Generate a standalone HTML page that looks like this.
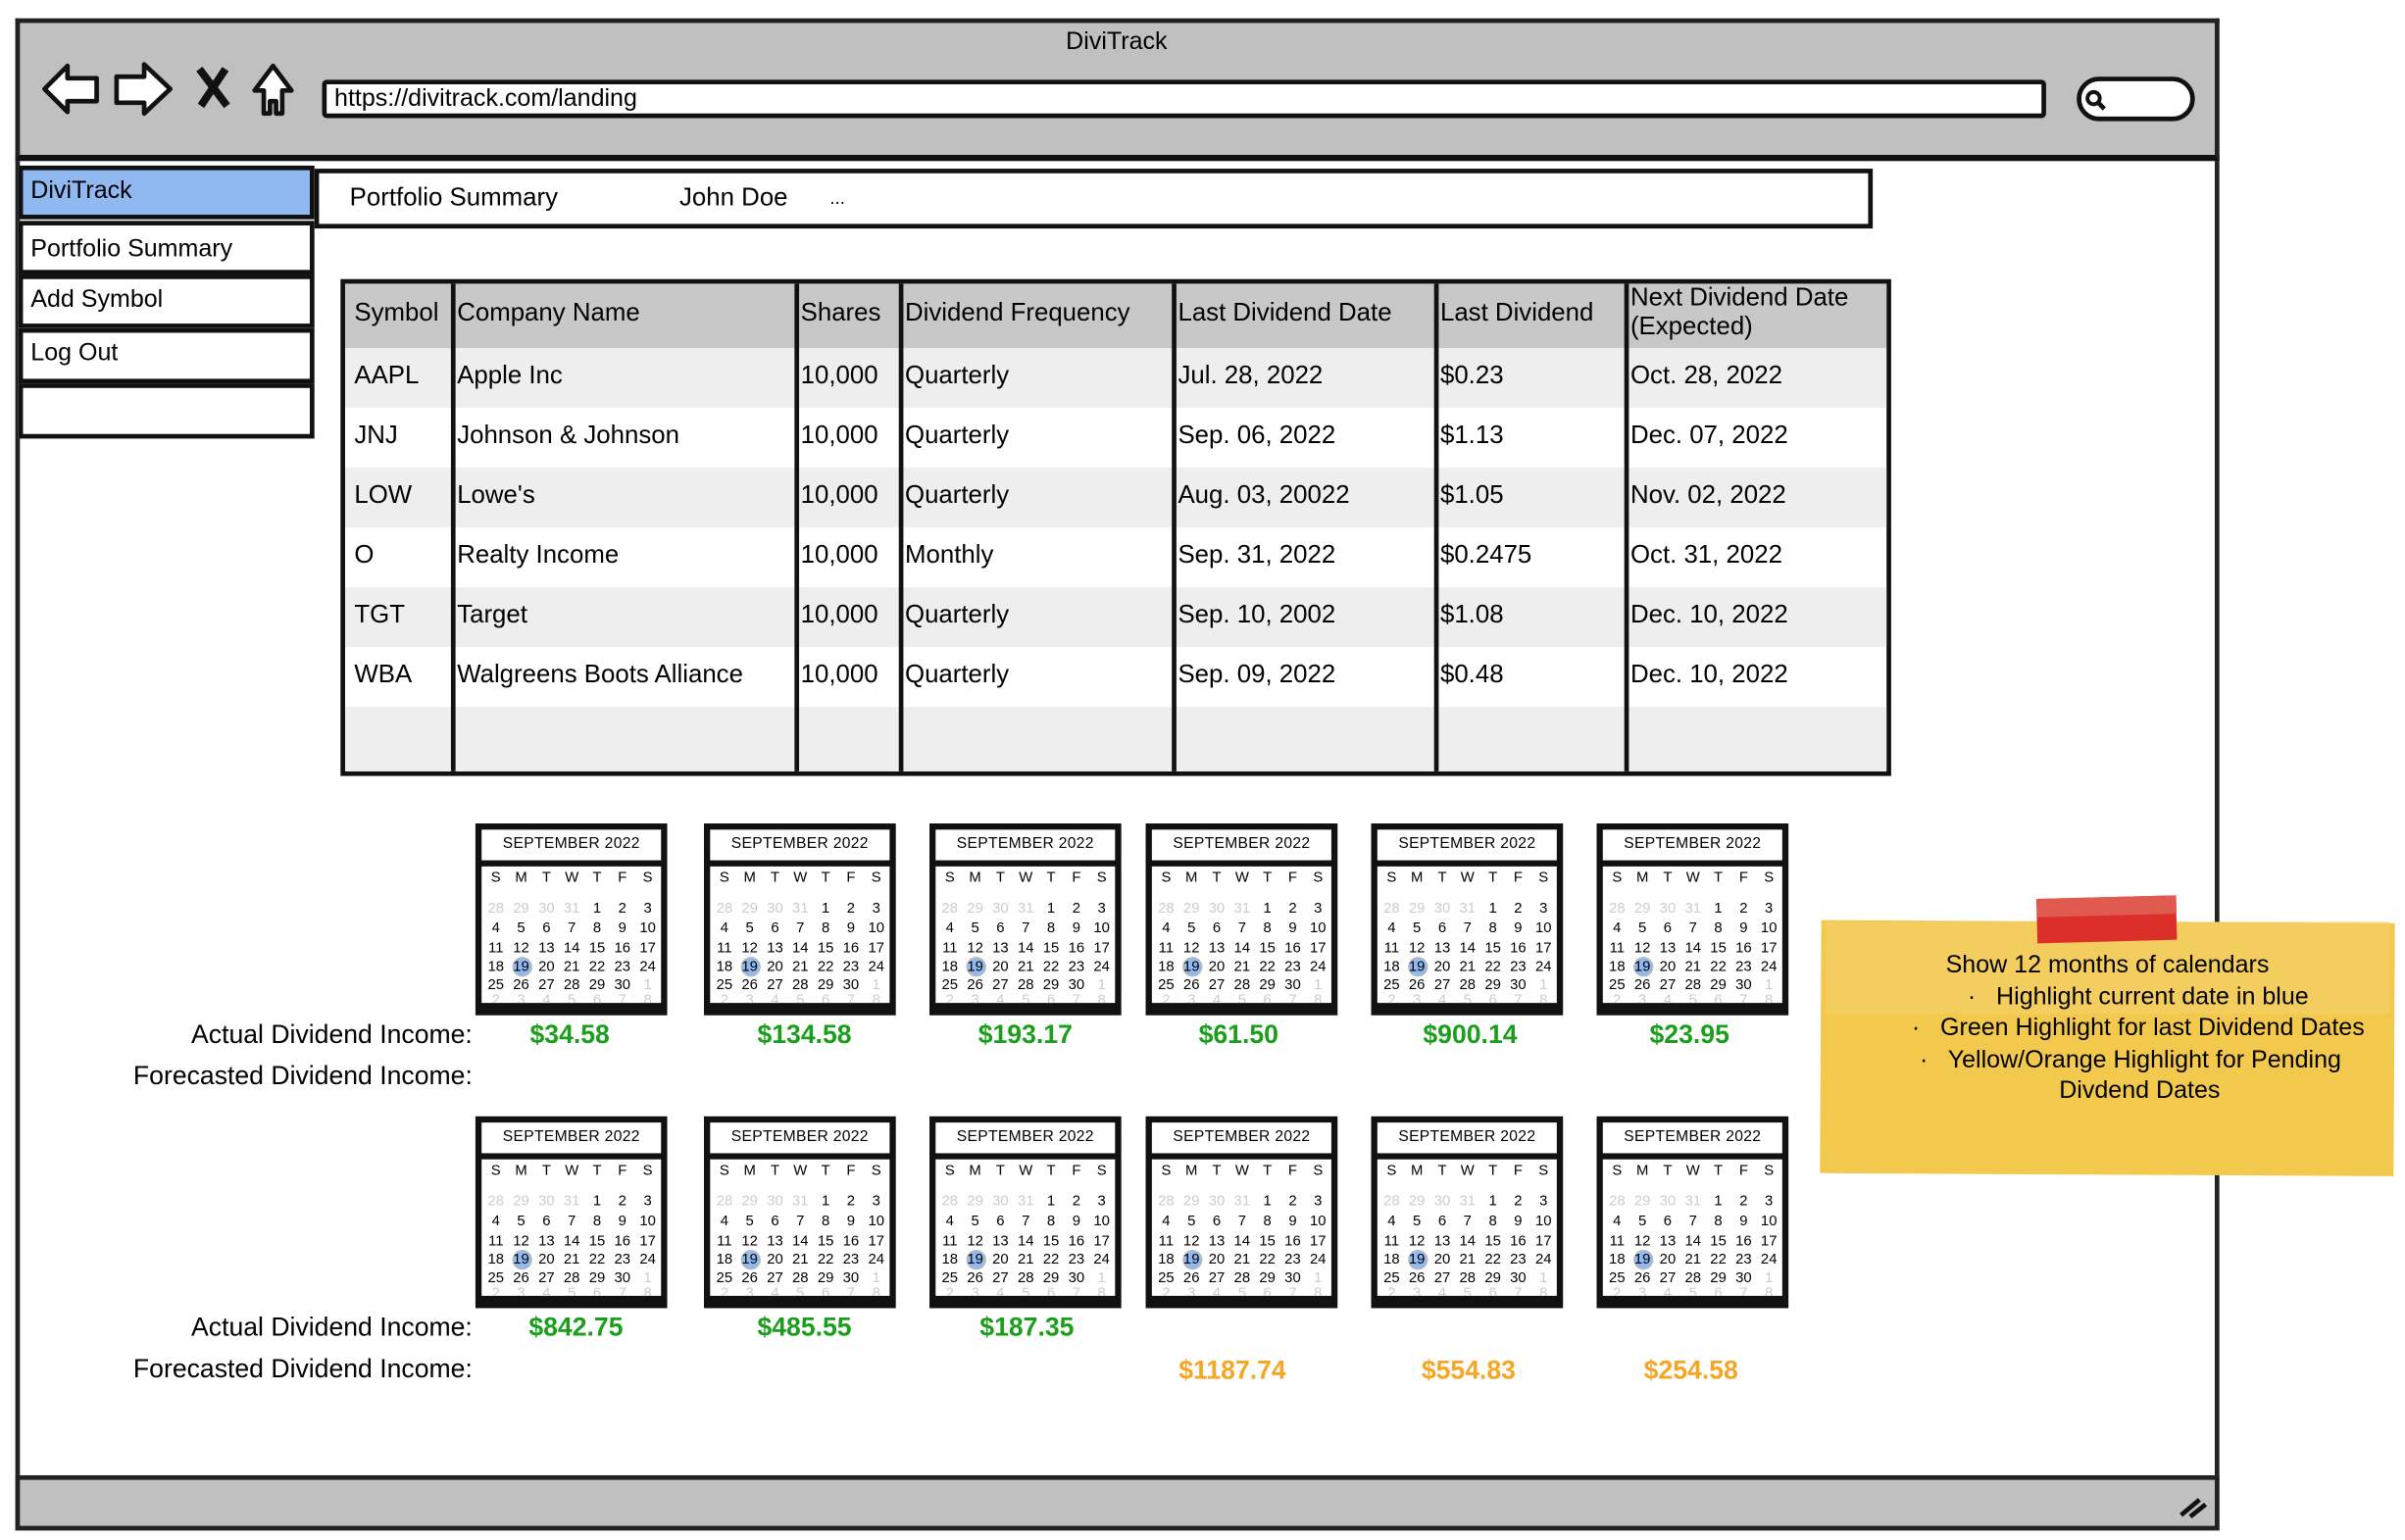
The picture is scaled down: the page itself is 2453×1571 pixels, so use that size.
<!DOCTYPE html>
<html><head><meta charset="utf-8">
<style>
*{margin:0;padding:0;box-sizing:border-box}
html,body{width:2453px;height:1570px;overflow:hidden;background:#fff}
#w{position:absolute;left:0;top:0;width:1568px;height:1004px;transform:scale(1.5644);transform-origin:0 0;font-family:"Liberation Sans",sans-serif;color:#000}
.a{position:absolute}
.frame{left:10px;top:12px;width:1437px;height:986px;border:3px solid #222;background:#fff}
.top{left:10px;top:12px;width:1437px;height:93px;background:#c0c0c0;border:3px solid #222;border-bottom:4px solid #111}
.bot{left:10px;top:962px;width:1437px;height:36px;background:#c0c0c0;border:3px solid #222}
.nav{left:12px;width:193px;border:3px solid #111;background:#fff;font-size:16px;padding-left:5px;line-height:28px}
.tbl{left:222px;top:182px;width:1011px;height:324px;border:3px solid #111;background:#fff;overflow:hidden}
.row{position:absolute;left:0;width:1005px}
.cell{position:absolute;font-size:16.5px;line-height:39px;white-space:nowrap}
.vl{position:absolute;top:0;width:3px;height:324px;background:#111}
.cal{width:125px;height:125px;border:4px solid #111;background:#111}
.cal .h{position:absolute;left:0;top:0;width:117px;height:20px;background:#fff;font-size:10px;text-align:center;line-height:20px;letter-spacing:.2px}
.cal .b{position:absolute;left:0;top:24px;width:117px;height:89px;background:#fff;overflow:hidden}
.cal span{position:absolute;width:16.6px;text-align:center;font-size:9.5px;line-height:12px}
.g{color:#ccc}
.lbl{font-size:16.5px;text-align:right;width:300px;left:8px}
.amt{font-size:17px;text-align:center;width:125px;font-weight:bold}
.gr{color:#1b9e1b}.or{color:#f5a623}
</style></head><body><div id="w">
<div class="a frame"></div>
<div class="a top"></div>
<div class="a" style="left:0;width:1456px;top:19px;text-align:center;font-size:16px">DiviTrack</div>
<svg class="a" style="left:26px;top:38px" width="170" height="40" viewBox="0 0 170 40" fill="#fff" stroke="#111" stroke-width="3" stroke-linejoin="round">
<path d="M3 20 L18 5 L18 13 L37 13 L37 28 L18 28 L18 35 Z"/>
<path d="M50 12 L68 12 L68 4 L85 20 L68 36 L68 29 L50 29 Z"/>
<path d="M104 7 L122 31 M121 7 L105 31" stroke-width="5"/>
<path d="M140 21 L152 5 L164 21 L158 21 L158 36 L154 36 L154 28 L150 28 L150 36 L146 36 L146 21 Z"/>
</svg>
<div class="a" style="left:210px;top:52px;width:1124px;height:25px;border:3px solid #111;border-radius:3px;background:#fff;font-size:16px;line-height:19px;padding-left:5px">https://divitrack.com/landing</div>
<div class="a" style="left:1354px;top:50px;width:77px;height:29px;border:3px solid #111;border-radius:15px;background:#fff"></div>
<svg class="a" style="left:1358px;top:57px" width="16" height="16"><circle cx="7" cy="7" r="4" fill="none" stroke="#111" stroke-width="2.5"/><path d="M10 10 L14 14" stroke="#111" stroke-width="3"/></svg>
<div class="a bot"></div>
<svg class="a" style="left:1420px;top:974px" width="20" height="16"><path d="M2 14 L14 4 M8 15 L18 7" stroke="#111" stroke-width="3"/></svg>

<div class="a nav" style="top:108px;height:35px;background:#8fb9f0">DiviTrack</div>
<div class="a nav" style="top:144px;height:35px;line-height:31px">Portfolio Summary</div>
<div class="a nav" style="top:179px;height:35px">Add Symbol</div>
<div class="a nav" style="top:214px;height:36px">Log Out</div>
<div class="a nav" style="top:250px;height:36px"></div>

<div class="a" style="left:205px;top:110px;width:1016px;height:39px;border:3px solid #111;background:#fff;font-size:16.5px;line-height:33px">
<span class="a" style="left:20px">Portfolio Summary</span><span class="a" style="left:235px">John Doe</span><span class="a" style="left:333px;font-size:12px">...</span></div>

<div class="a tbl">
<div class="row" style="top:0;height:42px;background:#c8c8c8"></div>
<div class="row" style="top:42px;height:39px;background:#eee"></div>
<div class="row" style="top:120px;height:39px;background:#eee"></div>
<div class="row" style="top:198px;height:39px;background:#eee"></div>
<div class="row" style="top:276px;height:50px;background:#eee"></div>
<div class="vl" style="left:69px"></div><div class="vl" style="left:293px"></div><div class="vl" style="left:361px"></div><div class="vl" style="left:539px"></div><div class="vl" style="left:710px"></div><div class="vl" style="left:834px"></div>
<div class="cell" style="top:0;left:6px">Symbol</div><div class="cell" style="top:0;left:73px">Company Name</div><div class="cell" style="top:0;left:297px">Shares</div><div class="cell" style="top:0;left:365px">Dividend Frequency</div><div class="cell" style="top:0;left:543px">Last Dividend Date</div><div class="cell" style="top:0;left:714px">Last Dividend</div><div class="cell" style="top:0;left:838px;line-height:19px">Next Dividend Date<br>(Expected)</div>

<div class="cell" style="top:41px;left:6px">AAPL</div><div class="cell" style="top:41px;left:73px">Apple Inc</div><div class="cell" style="top:41px;left:297px">10,000</div><div class="cell" style="top:41px;left:365px">Quarterly</div><div class="cell" style="top:41px;left:543px">Jul. 28, 2022</div><div class="cell" style="top:41px;left:714px">$0.23</div><div class="cell" style="top:41px;left:838px">Oct. 28, 2022</div>
<div class="cell" style="top:80px;left:6px">JNJ</div><div class="cell" style="top:80px;left:73px">Johnson &amp; Johnson</div><div class="cell" style="top:80px;left:297px">10,000</div><div class="cell" style="top:80px;left:365px">Quarterly</div><div class="cell" style="top:80px;left:543px">Sep. 06, 2022</div><div class="cell" style="top:80px;left:714px">$1.13</div><div class="cell" style="top:80px;left:838px">Dec. 07, 2022</div>
<div class="cell" style="top:119px;left:6px">LOW</div><div class="cell" style="top:119px;left:73px">Lowe's</div><div class="cell" style="top:119px;left:297px">10,000</div><div class="cell" style="top:119px;left:365px">Quarterly</div><div class="cell" style="top:119px;left:543px">Aug. 03, 20022</div><div class="cell" style="top:119px;left:714px">$1.05</div><div class="cell" style="top:119px;left:838px">Nov. 02, 2022</div>
<div class="cell" style="top:158px;left:6px">O</div><div class="cell" style="top:158px;left:73px">Realty Income</div><div class="cell" style="top:158px;left:297px">10,000</div><div class="cell" style="top:158px;left:365px">Monthly</div><div class="cell" style="top:158px;left:543px">Sep. 31, 2022</div><div class="cell" style="top:158px;left:714px">$0.2475</div><div class="cell" style="top:158px;left:838px">Oct. 31, 2022</div>
<div class="cell" style="top:197px;left:6px">TGT</div><div class="cell" style="top:197px;left:73px">Target</div><div class="cell" style="top:197px;left:297px">10,000</div><div class="cell" style="top:197px;left:365px">Quarterly</div><div class="cell" style="top:197px;left:543px">Sep. 10, 2002</div><div class="cell" style="top:197px;left:714px">$1.08</div><div class="cell" style="top:197px;left:838px">Dec. 10, 2022</div>
<div class="cell" style="top:236px;left:6px">WBA</div><div class="cell" style="top:236px;left:73px">Walgreens Boots Alliance</div><div class="cell" style="top:236px;left:297px">10,000</div><div class="cell" style="top:236px;left:365px">Quarterly</div><div class="cell" style="top:236px;left:543px">Sep. 09, 2022</div><div class="cell" style="top:236px;left:714px">$0.48</div><div class="cell" style="top:236px;left:838px">Dec. 10, 2022</div>
</div>

<div id="cals"></div>
<div class="a lbl" style="top:665px;font-size:17px">Actual Dividend Income:</div>
<div class="a lbl" style="top:692px;font-size:17px">Forecasted Dividend Income:</div>
<div class="a lbl" style="top:856px;font-size:17px">Actual Dividend Income:</div>
<div class="a lbl" style="top:883px;font-size:17px">Forecasted Dividend Income:</div>

<div class="a amt gr" style="left:309px;top:665px">$34.58</div>
<div class="a amt gr" style="left:462px;top:665px">$134.58</div>
<div class="a amt gr" style="left:606px;top:665px">$193.17</div>
<div class="a amt gr" style="left:745px;top:665px">$61.50</div>
<div class="a amt gr" style="left:896px;top:665px">$900.14</div>
<div class="a amt gr" style="left:1039px;top:665px">$23.95</div>
<div class="a amt gr" style="left:313px;top:856px">$842.75</div>
<div class="a amt gr" style="left:462px;top:856px">$485.55</div>
<div class="a amt gr" style="left:607px;top:856px">$187.35</div>
<div class="a amt or" style="left:741px;top:884px">$1187.74</div>
<div class="a amt or" style="left:895px;top:884px">$554.83</div>
<div class="a amt or" style="left:1040px;top:884px">$254.58</div>

<div class="a" style="left:1187px;top:601px;width:374px;height:165px;background:#f2c94c;transform:rotate(0.3deg)"></div>
<div class="a" style="left:1190px;top:601px;width:368px;height:60px;background:#f3d06a;opacity:.6"></div>
<div class="a" style="left:1328px;top:585px;width:91px;height:29px;background:#dc2f2a;transform:rotate(-1.5deg)"></div>
<div class="a" style="left:1328px;top:585px;width:91px;height:12px;background:#e05a50;transform:rotate(-1.5deg)"></div>
<div class="a" style="left:1187px;top:620px;width:374px;text-align:center;font-size:16px;line-height:20.5px">
<div style="margin-left:0">Show 12 months of calendars</div>
<div style="margin-left:40px">·&nbsp;&nbsp; Highlight current date in blue</div>
<div style="margin-left:40px">·&nbsp;&nbsp; Green Highlight for last Dividend Dates</div>
<div style="margin-left:30px">·&nbsp;&nbsp; Yellow/Orange Highlight for Pending</div>
<div style="margin-left:42px">Divdend Dates</div>
</div>

<script>
var xs=[310,459,606,747,894,1041],ys=[537,728];
var rows=[["S","M","T","W","T","F","S"],["","","","","","",""],
["g28","g29","g30","g31","1","2","3"],["4","5","6","7","8","9","10"],["11","12","13","14","15","16","17"],["18","b19","20","21","22","23","24"],["25","26","27","28","29","30","g1"],["g2","g3","g4","g5","g6","g7","g8"]];
var rt=[2,0,22,35,47.5,60,72,82];
var h="";
ys.forEach(function(y){xs.forEach(function(x){
h+='<div class="a cal" style="left:'+x+'px;top:'+y+'px"><div class="h">SEPTEMBER 2022</div><div class="b">';
rows.forEach(function(r,i){if(i==1)return;r.forEach(function(d,j){var c="",t=d;
if(d[0]=="g"){c="g";t=d.slice(1)}
var st="left:"+(1+j*16.5)+"px;top:"+rt[i]+"px;";
if(d[0]=="b"){t=d.slice(1);h+='<div class="a" style="left:'+(1+j*16.5+2)+'px;top:'+(rt[i]-1.5)+'px;width:13px;height:13px;border-radius:50%;background:#8fb9f0;border:1px solid #bbb"></div>';}
if(i==7)c="g";
h+='<span class="'+c+'" style="'+st+'">'+t+'</span>';});});
h+='</div></div>';});});
document.getElementById("cals").innerHTML=h;
</script>
</div></body></html>
